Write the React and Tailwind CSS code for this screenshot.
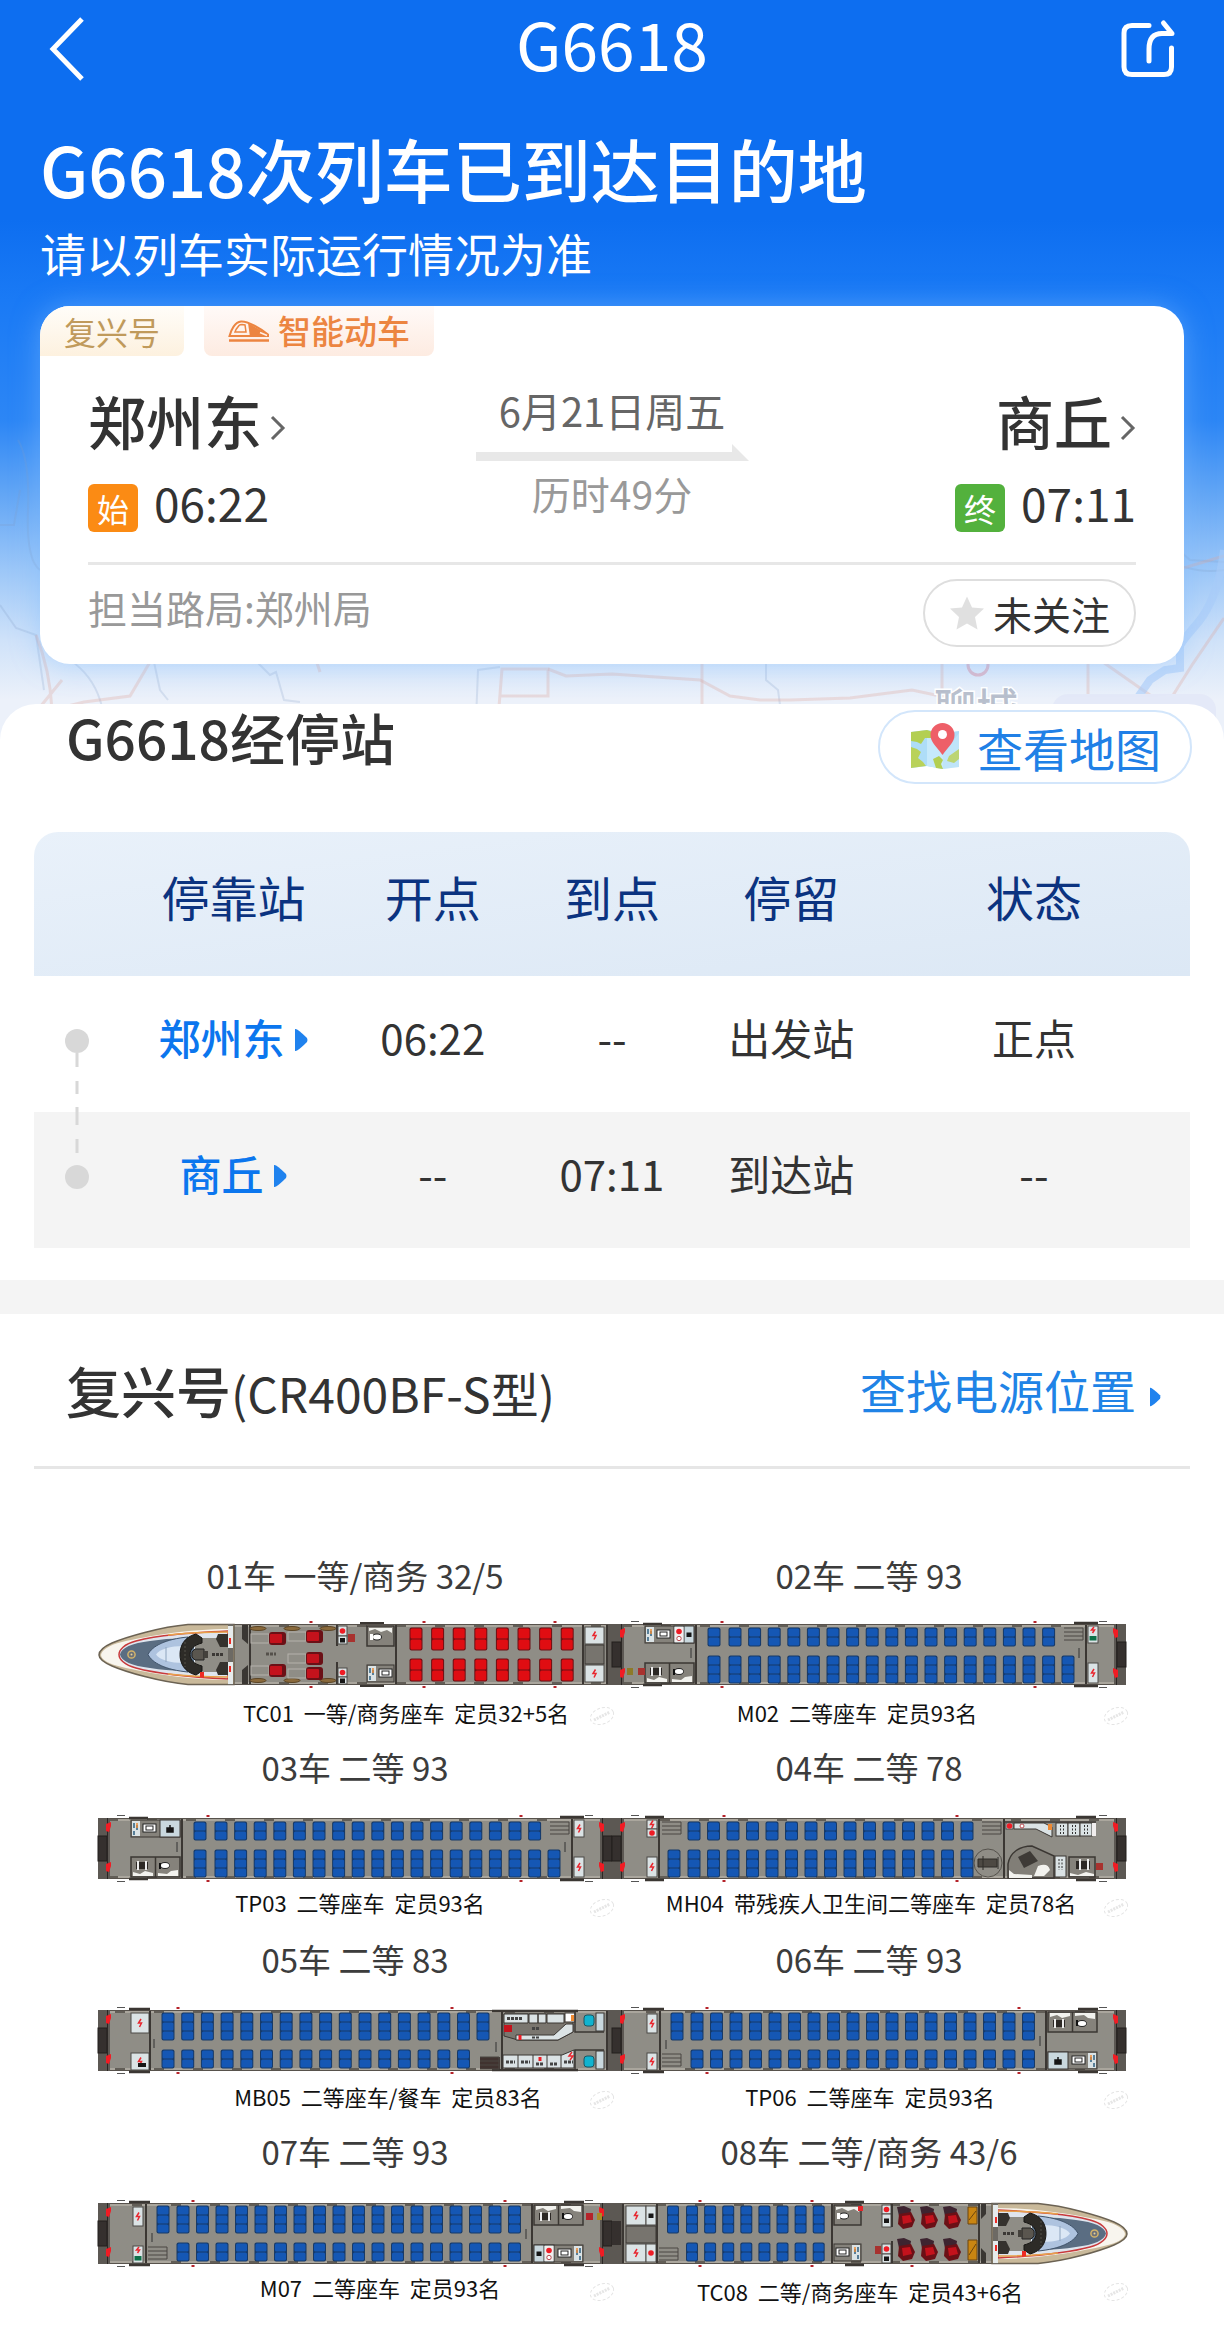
import React from "react";

const range = (start, step, count) => Array.from({ length: count }, (_, i) => start + i * step);

/* ---------- icons ---------- */

function BackIcon() {
  return (
    <svg viewBox="0 0 36 64" className="h-16 w-9" fill="none" stroke="#fff" strokeWidth="5">
      <path d="M34 2 5 32 34 62" />
    </svg>
  );
}

function ShareIcon() {
  return (
    <svg viewBox="0 0 56 60" className="h-15 w-14" fill="none" stroke="#fff" strokeWidth="5" strokeLinejoin="round">
      <path d="M29 6.500H12Q4 6.500 4 14V48Q4 55.500 12 55.500H44Q51.500 55.500 51.500 48V29" strokeLinecap="round" />
      <path d="M29 42V30Q29 14.500 42 14.500H52L43.500 4" strokeLinecap="round" />
    </svg>
  );
}

function TrainIcon() {
  return (
    <svg viewBox="0 0 42 22" className="h-[22px] w-[42px]">
      <path d="M1.500 16C3 10 7 2 13 1.500 20 1 33 9 40 14.500V16Z" fill="none" stroke="#ec8541" strokeWidth="2" />
      <path d="M20 3 40 14.500V17H22Z" fill="#ec8541" />
      <path d="M8 9.500 11 5.500Q12 4.500 14 4.500L17 5 18 12H7Z" fill="#fef4ee" stroke="#ec8541" strokeWidth="1.500" />
      <path d="M32 12.500 39 15.500" stroke="#fef0e8" strokeWidth="1.500" />
      <path d="M1 20.500H41" stroke="#ec8541" strokeWidth="2.500" />
    </svg>
  );
}

function Chevron() {
  return (
    <svg viewBox="0 0 16 26" className="mt-4 h-[26px] w-4" fill="none" stroke="#666" strokeWidth="3">
      <path d="M2 2 13 13 2 24" />
    </svg>
  );
}

function Triangle({ className = "mt-2 h-6 w-3.5" }) {
  return (
    <svg viewBox="0 0 14 24" className={className}>
      <path d="M1 1Q3 0 13 10Q14 12 13 14Q3 24 1 23Z" fill="#1f82ee" />
    </svg>
  );
}

function StarIcon() {
  return (
    <svg viewBox="0 0 36 36" className="size-9">
      <path d="M18 1.500 23 12.500 35 13.500 26 22 28.500 34.500 18 28.500 7.500 34.500 10 22 1 13.500 13 12.500Z" fill="#e0e0e0" />
    </svg>
  );
}

function MapIcon() {
  return (
    <svg viewBox="0 0 52 52" className="size-[52px]">
      <path d="M2 11 18 9 34 12 50 10V46L34 48 18 45 2 47Z" fill="#aeddf8" />
      <path d="M18 9 34 12V48L18 45Z" fill="#c6e9fb" />
      <path d="M2 11 18 9 24 11 22 17 16 17 12 23 8 21 2 20Z" fill="#b3cf52" />
      <path d="M2 26 8 28 12 31 9 37 14 41 17 45 2 47Z" fill="#b9d25a" />
      <path d="M24 38 30 35 34 39 32 43 34 48 27 47Z" fill="#b3cf52" />
      <path d="M40 35 50 28V38L45 42 38 40Z" fill="#a9c94c" />
      <path d="M34 34 50 12V46L34 48Z" fill="#fff" opacity=".22" />
      <path d="M33.500 34C27 25 21.500 21 21.500 14A12 12 0 0 1 45.500 14C45.500 21 40 25 33.500 34Z" fill="#ee5f68" />
      <circle cx="33.500" cy="13.500" r="4.500" fill="#fff" />
    </svg>
  );
}

/* ---------- faint route map behind the hero ---------- */

function MapBackdrop() {
  return (
    <svg
      viewBox="0 0 1224 340"
      preserveAspectRatio="none"
      className="absolute inset-x-0 bottom-0 h-[340px] w-full"
      fill="none"
      aria-hidden="true"
    >
      <g transform="translate(0 -20)">
        <g stroke="#7f9cc4" strokeOpacity=".22" strokeWidth="2">
          <path d="M18 60Q30 80 28 130T40 190M0 145H14L20 110M0 225 16 248 36 255 44 310" />
          <path d="M70 280Q92 295 100 320T104 340M154 282 160 310 168 320M258 283 270 295 276 292 284 320 300 322" />
          <path d="M476 340 478 290 500 287M766 278V300L778 310 782 340M1156 150 1190 180 1224 182M1160 175Q1190 195 1224 190" />
        </g>
        <g stroke="#dfa79b" strokeOpacity=".3" strokeWidth="3">
          <path d="M36 255Q50 290 52 330L84 322 130 316 150 282M36 332 62 300M498 340 502 289H548V316H500" />
          <path d="M548 289 566 296 612 294 700 300 730 316 760 320 790 320 850 318 912 310 940 316" />
          <path d="M702 270V340M942 270V320M1088 270V330M1224 238 1192 285 1170 320 1120 316M1100 280 1160 322M1150 198 1224 176" />
          <path d="M316 280 320 292" />
        </g>
      </g>
      <path d="M1224 150Q1218 200 1196 225T1180 250V268L1165 270 1150 280 1136 300" stroke="#a9ccf8" strokeOpacity=".6" strokeWidth="8" />
      <circle cx="978" cy="265" r="10" stroke="#d98a9c" strokeOpacity=".5" strokeWidth="3" />
      <text x="934" y="324" fontSize="42" fontWeight="500" fill="#a3acbd" fillOpacity=".75" stroke="#fff" strokeWidth="3" paintOrder="stroke">
        聊城
      </text>
      <rect x="1052" y="294" width="164" height="60" rx="16" fill="#e4e9f8" />
    </svg>
  );
}

/* ---------- train car drawing ---------- */

const FLOOR = "#8f8d86";
const WALL = "#3b3733";

function Seat({ x, y, n, color = "#1557b4", w = 12, h = 9 }) {
  return (
    <g>
      <rect x={x - w / 2 - 0.5} y={y - 0.5} width={w + 1} height={n * h + 1} rx="2" fill={color === "#1557b4" ? "#173a68" : "#6d1114"} />
      {range(0, 1, n).map((i) => (
        <rect key={i} x={x - w / 2 + 0.5} y={y + i * h + 0.5} width={w - 1} height={h - 1} rx="1.500" fill={color} />
      ))}
    </g>
  );
}

function Shell({ x = 0, w = 514, nudge = 0 }) {
  return (
    <g>
      <rect x={x} y="0" width={w} height="61" fill={FLOOR} />
      <rect x={x} y="0" width={w} height="3" fill="#aaa69d" />
      <rect x={x} y="58" width={w} height="3" fill="#aaa69d" />
      {range(x + 14 + nudge, 39, Math.floor((w - 14) / 39)).map((p) => (
        <g key={p} fill="#625e57">
          <rect x={p} y="0" width="10" height="3" />
          <rect x={p} y="58" width="10" height="3" />
        </g>
      ))}
      <path d={`M${x} .5H${x + w}M${x} 60.500H${x + w}`} stroke="#57524c" />
    </g>
  );
}

function Coupler({ x, flip }) {
  return (
    <g transform={flip ? `translate(${x} 0) scale(-1 1)` : `translate(${x} 0)`}>
      <rect width="12" height="61" fill="#5c5853" />
      <rect y="18" width="9" height="25" fill="#35302e" stroke="#221e1d" />
      <path d="M9.500 0V61" stroke="#2b2725" />
      <path d="M8 6 13 4V8L11 14 8 13ZM8 46 13 44V48L11 54 8 53Z" fill="#f01c24" />
      <path d="M19-2.500H27M19 63.500H27" stroke="#555" />
    </g>
  );
}

function Wall({ x }) {
  return <path d={`M${x} 1V60`} stroke={WALL} strokeWidth="2" />;
}

function Box({ x, y, w = 10, h = 17, mark = "bolt" }) {
  const cx = x + w / 2;
  const cy = y + h / 2;
  return (
    <g>
      <rect x={x} y={y} width={w} height={h} fill="#dbe3e5" stroke="#4c4a47" />
      {mark === "bolt" && <path d={`M${cx + 1} ${cy - 4} ${cx - 1.5} ${cy}H${cx + 1.5}L${cx - 0.5} ${cy + 4}`} fill="none" stroke="#e8272f" strokeWidth="1.500" />}
      {mark === "red" && <circle cx={cx} cy={cy} r="2.800" fill="#ee1c25" />}
      {mark === "black" && <rect x={cx - 2.5} y={cy - 2} width="5" height="4.500" fill="#161616" />}
      {mark === "green" && (
        <g>
          <path d={`M${cx + 1} ${y + 1} ${cx - 1.5} ${y + 4}H${cx + 1.5}L${cx - 0.5} ${y + 7}`} fill="none" stroke="#e8272f" strokeWidth="1.500" />
          <rect x={cx - 3.5} y={y + h - 7} width="7" height="4.500" fill="#0d7048" />
        </g>
      )}
    </g>
  );
}

function Stairs({ x, y, dark }) {
  return (
    <g>
      {dark && <rect x={x} y={y} width="20" height="12" fill="#40322f" />}
      <path d={`M${x} ${y}H${x + 19}M${x} ${y + 4}H${x + 19}M${x} ${y + 8}H${x + 19}M${x} ${y + 12}H${x + 19}M${x + 19} ${y}V${y + 12}`} stroke="#4b4742" fill="none" />
    </g>
  );
}

function Toilets({ x, y, flip, single }) {
  const w = single ? 27 : 49;
  return (
    <g transform={flip ? `translate(${x} ${y + 20}) scale(1 -1)` : `translate(${x} ${y})`}>
      <rect width={w} height="20" fill="#85827b" stroke={WALL} strokeWidth="1.500" />
      {single ? (
        <g>
          <path d="M2 18V15L8 17 14 14 20 16 25 13V18Z" fill="#f2f2ee" />
          <ellipse cx="10" cy="9" rx="4.500" ry="3" fill="#fff" stroke="#222" />
          <rect x="3" y="6" width="3" height="6" fill="#fff" />
        </g>
      ) : (
        <g>
          <path d="M24.500 0V20" stroke={WALL} strokeWidth="1.500" />
          <rect x="5" y="5" width="12" height="7" fill="#2c2825" />
          <path d="M7 4V13M15 4V13" stroke="#eee" strokeWidth="2" />
          <path d="M2 19V15L9 17 14 14 22 16V19ZM27 19V16L36 17 40 14 47 13V19Z" fill="#f2f2ee" />
          <ellipse cx="34" cy="8.500" rx="4.500" ry="3" fill="#fff" stroke="#222" />
          <rect x="28" y="6" width="2" height="6" fill="#111" />
        </g>
      )}
    </g>
  );
}

function Galley({ x, y, flip, marks = true, small }) {
  const w = small ? 27 : 49;
  return (
    <g transform={flip ? `translate(${x + w} ${y}) scale(-1 1)` : `translate(${x} ${y})`}>
      <rect width={w} height="17" fill="#85827b" stroke={WALL} />
      <rect x="1" y="1" width="8" height="15" fill="#dbe3e5" />
      <path d="M3 3V8M6 5V10M3 11V15" stroke="#2e5f7f" strokeWidth="1.500" />
      <path d="M6 3V8" stroke="#ee8a33" strokeWidth="1.500" />
      <rect x="12" y="4" width="13" height="8" fill="#fff" stroke="#222" />
      <rect x="15" y="6" width="7" height="4" fill="#fff" stroke="#222" />
      {!small && (
        <g>
          <rect x="29" y="0" width="20" height="17" fill="#c9d8de" stroke={WALL} />
          {marks ? (
            <g>
              <path d="M39 0V17" stroke={WALL} />
              <rect x="29.500" y="1" width="9" height="15" fill="#f1eeee" />
              <circle cx="34" cy="5.500" r="2.800" fill="#ee1c25" />
              <circle cx="34" cy="12.500" r="2.200" fill="#fff" stroke="#b94a50" />
              <rect x="41.500" y="6.500" width="5" height="4.500" fill="#161616" />
            </g>
          ) : (
            <path d="M36 8H42V12H36ZM39 5V9" fill="#161616" stroke="#161616" strokeWidth="1.500" />
          )}
        </g>
      )}
    </g>
  );
}

function Pins({ at }) {
  return (
    <g fill="#b5232a">
      {at.map((x) => (
        <path key={x} d={`M${x - 1.5}-3H${x + 1.5}V-1H${x - 1.5}ZM${x - 1.5} 62H${x + 1.5}V64H${x - 1.5}Z`} />
      ))}
    </g>
  );
}

function Nose() {
  return (
    <g>
      <path d="M136 .5H90C62 3 28 13 14 19 5 23 1 27 1 31S5 38 14 42C28 48 62 58 90 60.500H136Z" fill="#c9b99a" stroke="#6b6253" strokeWidth="1.500" />
      <path d="M132 5C90 5 50 12 24 18 10 21 3 27 3 31S10 40 24 43C50 49 90 56 132 56Z" fill="#f8f5ee" />
      <path d="M130 7C90 9 60 11 38 17 26 20 21 26 21 30.500S26 41 38 44C60 50 90 53 130 55Z" fill="#dfe5ee" stroke="#c83a3c" strokeWidth="1.500" />
      <path d="M130 8Q95 8 70 11M130 53Q95 53 70 50" stroke="#e8a04a" fill="none" strokeWidth="1.500" />
      <path d="M22 30.500C23 24 34 19 52 17 70 14 85 14 96 15V46C85 47 70 47 52 44 34 42 23 37 22 30.500Z" fill="#5a6d82" />
      <path d="M50 30.500C54 22 68 15 90 13V48C68 46 54 39 50 30.500Z" fill="#aec3df" stroke="#40536a" />
      <path d="M58 30.500C62 25 72 22 86 22V39C72 39 62 36 58 30.500Z" fill="#dbe7f5" />
      <path d="M68 23V38" stroke="#8da3bd" />
      <circle cx="33.500" cy="30.500" r="3.600" fill="#6b7079" stroke="#d3b36a" strokeWidth="1.500" />
      <circle cx="33.500" cy="30.500" r="1" fill="#e9d394" />
      <path d="M97 14H130V48H97Z" fill={FLOOR} />
      <path d="M120 10H130V23H122L118 15ZM120 51H130V38H122L118 46Z" fill="#35322e" />
      <path d="M98 10C86 13 82 22 82 30.500S86 48 98 51L104 47V42C96 40 92 36 92 30.500S96 21 104 19V14Z" fill="#2d2b27" stroke="#171614" />
      <path d="M87 18V43" stroke="#55524a" strokeDasharray="2 2" />
      <path d="M97 25H106V36H97L94 33V28Z" fill="#5a564f" stroke="#222" />
      <path d="M106 27H110V34H106Z" fill="#44413c" />
      <path d="M114 30.500H125" stroke="#3c3936" strokeWidth="3" strokeDasharray="3 1" />
      <path d="M102 53V48H106V54Z" fill="#ee2a24" />
      <rect x="130" y="0" width="5" height="61" fill="#6d6a64" />
      <rect x="130" y="2" width="5" height="22" fill="#e6ebec" />
      <rect x="130" y="38" width="5" height="22" fill="#e6ebec" />
      <path d="M132 14V20M132 42V48" stroke="#ee2a24" strokeWidth="2" />
    </g>
  );
}

function Recliner({ x, y }) {
  return (
    <g>
      <rect x={x - 26} y={y - 4} width="18" height="9" fill="none" stroke="#b5b2ab" />
      <rect x={x - 8} y={y - 6} width="17" height="13" rx="3" fill="#6b1016" />
      <rect x={x - 7} y={y - 4} width="12" height="9" rx="1" fill="#c4121c" />
    </g>
  );
}

function LoungeSeat({ x, y }) {
  return (
    <g>
      <path d={`M${x - 9} ${y - 10} ${x - 2} ${y - 11} ${x + 5} ${y - 8} ${x + 4} ${y - 1}H${x - 7}Z`} fill="#3d2430" />
      <path d={`M${x - 7} ${y - 3} ${x + 5} ${y - 5} ${x + 9} ${y + 3} ${x + 6} ${y + 10} ${x - 3} ${y + 12} ${x - 8} ${y + 7}Z`} fill="#6b1016" />
      <path d={`M${x - 4} ${y - 1} ${x + 4} ${y - 2} ${x + 6} ${y + 5} ${x - 3} ${y + 7}Z`} fill="#c4121c" />
    </g>
  );
}

function Car01() {
  return (
    <g>
      <Shell x={134} w={380} nudge={33} />
      <Nose />
      <path d="M144 1V15L150 20V1M144 60V46L150 41V60" fill="#3a3733" />
      <Wall x={152} />
      {[160, 194, 230].map((x) => (
        <g key={x} fill="#8a6a3c" stroke="#5b4526">
          <ellipse cx={x} cy="4.500" rx="8" ry="2" />
          <ellipse cx={x} cy="56.500" rx="8" ry="2" />
        </g>
      ))}
      <Recliner x={179} y={14} />
      <Recliner x={216} y={12} />
      <Recliner x={216} y={34} />
      <Recliner x={179} y={46} />
      <Recliner x={216} y={49} />
      <path d="M168 30H178" stroke="#55514b" strokeWidth="3" strokeDasharray="3 1" />
      <path d="M239 1V22M239 38V60" stroke={WALL} strokeWidth="2" />
      <Box x={240} y={2} w={9} h={10} mark="red" />
      <Box x={240} y={12} w={9} h={8} mark="black" />
      <Box x={240} y={44} w={9} h={9} mark="red" />
      <Box x={240} y={53} w={9} h={7} mark="black" />
      <rect x="250" y="10" width="7" height="8" fill="#a8322f" />
      <path d="M262-1H286M262 62H286" stroke={WALL} strokeWidth="2" />
      <Toilets x={269} y={2} single flip />
      <Galley x={269} y={41} small />
      <Wall x={298} />
      {range(318, 21.6, 8).map((x) => (
        <g key={x}>
          <Seat x={x} y={4} n={2} w={12} h={11} color="#e00d12" />
          <Seat x={x} y={35} n={2} w={12} h={11} color="#e00d12" />
        </g>
      ))}
      <Wall x={485} />
      <Box x={487} y={3} w={19} h={17} />
      <rect x="487" y="21" width="19" height="19" fill="#77746e" stroke={WALL} />
      <Box x={487} y={41} w={19} h={17} />
      <Wall x={509} />
      <rect x="510" width="4" height="61" fill="#5c5853" />
      <Pins at={[213, 326, 457]} />
    </g>
  );
}

function StandardCar({ marks = true, green }) {
  return (
    <g>
      <Shell nudge={-4} />
      <Coupler x={0} />
      <Coupler x={514} flip />
      <path d="M31 0H50M31 61H50M462-1H486M462 62H486" stroke={WALL} strokeWidth="2.500" />
      <Galley x={33} y={2} marks={marks} />
      <Toilets x={33} y={39} />
      <Wall x={84} />
      <path d="M79 24V34M467 24V34" stroke="#333" />
      <Seat x={102} y={4} n={2} />
      <Seat x={102} y={32} n={3} />
      {range(123, 19.6, 17).map((x) => (
        <g key={x}>
          <Seat x={x} y={4} n={2} />
          <Seat x={x} y={32} n={3} />
        </g>
      ))}
      <Seat x={456} y={32} n={3} />
      <Stairs x={452} y={4} />
      <Wall x={474} />
      <Box x={476} y={2} mark={green ? "green" : "bolt"} />
      <Box x={476} y={39} h={20} />
      {marks && <rect x="26" y="44" width="7" height="7" fill="#a8322f" />}
      {marks && <rect x="15" y="44" width="6" height="7" fill="#8d7a28" />}
      <Pins at={[110, 423]} />
    </g>
  );
}

function ReverseCar({ marks, green }) {
  return (
    <g>
      <Shell nudge={20} />
      <Coupler x={0} />
      <Coupler x={514} flip />
      <path d="M31-1H52M31 62H52M466-1H486M466 62H486" stroke={WALL} strokeWidth="2.500" />
      <Box x={35} y={4} h={19} />
      <Box x={35} y={43} h={17} mark={green ? "green" : "bolt"} />
      <Wall x={48} />
      <path d="M54 30V39M428 26V36" stroke="#333" />
      <Stairs x={50} y={44} />
      <Seat x={65} y={3} n={3} />
      {range(85, 19.5, 18).map((x) => (
        <g key={x}>
          <Seat x={x} y={3} n={3} />
          <Seat x={x} y={40} n={2} />
        </g>
      ))}
      <Wall x={434} />
      <Toilets x={436} y={2} flip />
      <Galley x={436} y={42} flip marks={marks} />
      {marks && <rect x="488" y="10" width="7" height="7" fill="#b5232a" />}
      {marks && <rect x="499" y="10" width="5" height="7" fill="#a98b25" />}
      <Pins at={[95, 407]} />
    </g>
  );
}

function Car04() {
  return (
    <g>
      <Shell nudge={34} />
      <Coupler x={0} />
      <Coupler x={514} flip />
      <path d="M33-1H52M33 62H52M464-1H484M464 62H484" stroke={WALL} strokeWidth="2.500" />
      <Box x={35} y={2} h={9} />
      <Box x={35} y={11} h={8} mark="red" />
      <Box x={35} y={39} h={20} />
      <Wall x={47} />
      <Stairs x={50} y={4} />
      <Seat x={62} y={32} n={3} />
      {range(82, 19.5, 15).map((x) => (
        <g key={x}>
          <Seat x={x} y={4} n={2} />
          <Seat x={x} y={32} n={3} />
        </g>
      ))}
      <Stairs x={370} y={4} />
      <circle cx="376" cy="45" r="14" fill="none" stroke="#55524c" />
      <path d="M366 41H385V49H366ZM371 38V52M386 39V51" fill="#4d4943" stroke="#2f2c29" />
      <Wall x={392} />
      <path d="M393 4H484" stroke={WALL} strokeWidth="1.500" />
      <Box x={394} y={5} w={7} h={6} mark="red" />
      <path d="M402 5H432L440 9V19L424 11H402Z" fill="#dbe3e5" stroke={WALL} />
      <circle cx="410" cy="8" r="2" fill="#fff" stroke="#b94a50" />
      <rect x="436" y="6" width="4" height="6" fill="#ee8a33" />
      {[444, 456, 468].map((x) => (
        <g key={x}>
          <rect x={x} y="5" width="12" height="13" fill="#dbe3e5" stroke={WALL} />
          <path d={`M${x + 4.5} 7V16M${x + 7.500} 7V16`} stroke="#333" strokeDasharray="2 1.500" />
        </g>
      ))}
      <rect x="480" y="5" width="4" height="13" fill="#f1eeee" />
      <path d="M396 60V46C398 34 408 28 420 28L442 38V60Z" fill="#817e77" stroke={WALL} strokeWidth="1.500" />
      <path d="M406 39 418 33 426 43 412 50Z" fill="#3e3a36" />
      <path d="M397 52 402 56 420 57V60H397ZM426 48Q436 44 438 52L432 58H422Z" fill="#f2f2ee" />
      <rect x="443" y="38" width="11" height="21" fill="#dbe3e5" stroke={WALL} />
      <path d="M447 41V52M450 41V52" stroke="#333" strokeDasharray="2 1.500" />
      <rect x="457" y="39" width="26" height="20" fill="#85827b" stroke={WALL} strokeWidth="1.500" />
      <path d="M464 43H478V51H464Z" fill="#2c2825" />
      <path d="M468 41V52M476 41V52" stroke="#eee" strokeWidth="2" />
      <path d="M458 58V55L466 57 474 54 482 56V58Z" fill="#f2f2ee" />
      <rect x="484" y="45" width="7" height="7" fill="#a8322f" />
      <Pins at={[112, 345]} />
    </g>
  );
}

function Car05() {
  return (
    <g>
      <Shell nudge={3} />
      <Coupler x={0} />
      <path d="M31-1H52M31 62H52M394 1H480M394 60H480" stroke={WALL} strokeWidth="2.500" />
      <Box x={33} y={3} w={18} h={20} />
      <Box x={33} y={43} w={18} h={17} />
      <rect x="40" y="53" width="8" height="4" fill="#161616" />
      <Wall x={52} />
      <path d="M56 29V38M398 32V42" stroke="#333" />
      {range(70, 19.7, 16).map((x) => (
        <g key={x}>
          <Seat x={x} y={3} n={3} />
          <Seat x={x} y={40} n={2} />
        </g>
      ))}
      <Seat x={385} y={3} n={3} />
      <Stairs x={382} y={47} dark />
      <Wall x={404} />
      <path d="M406 4H475V22L460 30H420L406 26Z" fill="#7a766f" stroke={WALL} />
      <path d="M406 4H430V13H406ZM431 4H440V13H431ZM440 4H448V13H440ZM449 4H466V13H449Z" fill="#dbe3e5" stroke={WALL} />
      <path d="M409 8.500H424M434 18.500H442" stroke="#444" strokeWidth="3" strokeDasharray="3 1" />
      <path d="M418 25H456L468 14H475V22L460 30H418Z" fill="#dbe3e5" stroke={WALL} />
      <path d="M434 27.500H442" stroke="#444" strokeWidth="2" strokeDasharray="3 1" />
      <rect x="467" y="3" width="10" height="9" fill="#fff" stroke={WALL} />
      <rect x="473" y="5" width="3" height="6" fill="#ee8a33" />
      <rect x="406" y="15" width="8" height="7" fill="#c4121c" />
      <path d="M422 25V30M444 46V52" stroke="#ee1c25" strokeWidth="3" />
      <path d="M405 45H464L476 40V58H405Z" fill="#dbe3e5" stroke={WALL} />
      <path d="M420 45V58M435 45V58M449 45V58M463 45V58" stroke={WALL} />
      <path d="M408 52H417M423 52H432M438 54H446M452 54H460M466 52H475" stroke="#444" strokeWidth="3" strokeDasharray="3 1" />
      <path d="M474 42 471 46H475L472 50" stroke="#e8272f" strokeWidth="1.500" fill="none" />
      <path d="M442 47V51" stroke="#ee1c25" strokeWidth="3" />
      <path d="M477 1V22H506M477 60V40H506" fill="none" stroke={WALL} strokeWidth="1.500" />
      <rect x="486" y="5" width="10" height="11" rx="3" fill="#10b3cf" stroke="#1b5560" />
      <rect x="486" y="46" width="10" height="11" rx="3" fill="#10b3cf" stroke="#1b5560" />
      <rect x="498" y="3" width="8" height="18" fill="#c9d8de" stroke={WALL} />
      <rect x="498" y="41" width="8" height="18" fill="#c9d8de" stroke={WALL} />
      <Wall x={509} />
      <rect x="510" width="4" height="61" fill="#5c5853" />
      <Pins at={[80, 354]} />
    </g>
  );
}

function Car08() {
  return (
    <g>
      <Shell x={0} w={382} nudge={30} />
      <g transform="translate(516 0) scale(-1 1)">
        <Nose />
      </g>
      <rect width="10" height="61" fill="#5c5853" />
      <rect y="18" width="9" height="24" fill="#35302e" />
      <Wall x={11} />
      <Box x={14} y={3} w={20} h={19} />
      <Box x={34} y={3} w={10} h={19} mark="black" />
      <rect x="14" y="23" width="30" height="17" fill="#77746e" stroke={WALL} />
      <Box x={14} y={41} w={20} h={18} />
      <Box x={34} y={41} w={10} h={18} mark="red" />
      <Wall x={45} />
      <Stairs x={47} y={45} />
      <Seat x={61} y={3} n={3} w={11} />
      {range(80, 18.1, 8).map((x) => (
        <g key={x}>
          <Seat x={x} y={3} n={3} w={11} />
          <Seat x={x} y={40} n={2} w={11} />
        </g>
      ))}
      <Wall x={220} />
      <Toilets x={222} y={2} single flip />
      <Galley x={222} y={41} flip small />
      <rect x="246" y="3" width="5" height="5" fill="#e5262b" />
      <path d="M233-1H252M233 62H252" stroke={WALL} strokeWidth="2.500" />
      <Box x={270} y={2} w={9} h={9} mark="red" />
      <Box x={270} y={11} w={9} h={13} mark="black" />
      <Box x={270} y={41} w={9} h={10} mark="red" />
      <Box x={270} y={51} w={9} h={9} mark="black" />
      <rect x="263" y="43" width="6" height="8" fill="#a8322f" />
      <path d="M280 1V24M280 38V60" stroke={WALL} strokeWidth="2" />
      {[294, 317, 340].map((x) => (
        <g key={x}>
          <LoungeSeat x={x} y={14} />
          <LoungeSeat x={x} y={46} />
        </g>
      ))}
      <path d="M356 4H365V21H356ZM356 37H365V57H356Z" fill="#c98512" stroke="#6b4510" />
      <path d="M357 17 364 8M357 52 364 41" stroke="#6b4510" />
      <Wall x={367} />
      <path d="M369 1V16L374 11V1M369 60V45L374 50V60" fill="#3a3733" />
      <Pins at={[88, 200, 300]} />
    </g>
  );
}

const cars = [
  { title: "01车 一等/商务 32/5", caption: "TC01  一等/商务座车  定员32+5名", cx: 308, cy: 114, top: 25, Drawing: Car01 },
  { title: "02车 二等 93", caption: "M02  二等座车  定员93名", cx: 245, cy: 114, top: 25, Drawing: StandardCar, props: { green: true } },
  { title: "03车 二等 93", caption: "TP03  二等座车  定员93名", cx: 262, cy: 112, top: 27, Drawing: StandardCar, props: { marks: false } },
  { title: "04车 二等 78", caption: "MH04  带残疾人卫生间二等座车  定员78名", cx: 259, cy: 112, top: 27, Drawing: Car04 },
  { title: "05车 二等 83", caption: "MB05  二等座车/餐车  定员83名", cx: 290, cy: 114, top: 27, Drawing: Car05 },
  { title: "06车 二等 93", caption: "TP06  二等座车  定员93名", cx: 258, cy: 114, top: 27, Drawing: ReverseCar, props: { marks: false } },
  { title: "07车 二等 93", caption: "M07  二等座车  定员93名", cx: 282, cy: 113, top: 28, Drawing: ReverseCar, props: { marks: true, green: true } },
  { title: "08车 二等/商务 43/6", caption: "TC08  二等/商务座车  定员43+6名", cx: 248, cy: 117, top: 28, Drawing: Car08 },
];

function TrainCar({ title, caption, cx, cy, top, Drawing, props }) {
  return (
    <li>
      <h3 className="text-center text-[33px] leading-12 whitespace-nowrap text-[#3c3c3c]">{title}</h3>
      <svg viewBox="0 0 514 144" className="block w-full overflow-visible" role="img" aria-label={caption}>
        <g transform={`translate(0 ${top})`}>
          <Drawing {...props} />
        </g>
        <text x={cx} y={cy + 9} textAnchor="middle" fontSize="22" fill="#111" className="whitespace-pre">
          {caption}
        </text>
        <ellipse cx="504" cy="117" rx="12" ry="8" fill="none" stroke="#e4e4e4" strokeDasharray="3 2" transform="rotate(-20 504 117)" />
        <path d="M496 121 512 113" stroke="#e6e6e6" strokeWidth="3" strokeDasharray="2 1" />
      </svg>
    </li>
  );
}

/* ---------- stops table ---------- */

const stops = [
  { name: "郑州东", depart: "06:22", arrive: "--", stay: "出发站", status: "正点" },
  { name: "商丘", depart: "--", arrive: "07:11", stay: "到达站", status: "--" },
];

function StopMarker({ last }) {
  return (
    <svg viewBox="0 0 24 136" className="mx-auto block h-[136px] w-6" aria-hidden="true">
      {last ? (
        <path d="M12 0V13M12 27V41" stroke="#d8d8d8" strokeWidth="3" />
      ) : (
        <path d="M12 77V91M12 105V118M12 131V136" stroke="#d8d8d8" strokeWidth="3" />
      )}
      <circle cx="12" cy="65" r="12" fill="#d8d8d8" />
    </svg>
  );
}

function StopsTable() {
  return (
    <div className="mx-[34px] mt-12 overflow-hidden rounded-t-3xl">
      <table className="w-full table-fixed border-collapse text-center text-[42px] text-[#333]">
        <colgroup>
          <col className="w-[7.5%]" />
          <col className="w-[19.5%]" />
          <col className="w-[15%]" />
          <col className="w-[16%]" />
          <col className="w-[15%]" />
          <col className="w-[27%]" />
        </colgroup>
        <thead>
          <tr className="h-36 bg-linear-to-br from-[#e9f1fa] to-[#dce8f5] text-5xl text-[#0b3380]">
            <th aria-label="进度" />
            {["停靠站", "开点", "到点", "停留", "状态"].map((h) => (
              <th key={h} scope="col" className="p-0 pb-4 font-normal whitespace-nowrap">{h}</th>
            ))}
          </tr>
        </thead>
        <tbody>
          {stops.map((s, i) => (
            <tr key={s.name} className="even:bg-[#f4f4f4]">
              <td className="p-0"><StopMarker last={i === stops.length - 1} /></td>
              <td className="p-0 pb-4">
                <a href="#station" className="inline-flex items-center gap-2.5 font-medium whitespace-nowrap text-[#0b76ee]">
                  {s.name}
                  <Triangle />
                </a>
              </td>
              <td className="p-0 pb-4">{s.depart}</td>
              <td className="p-0 pb-4">{s.arrive}</td>
              <td className="p-0 pb-4 whitespace-nowrap">{s.stay}</td>
              <td className="p-0 pb-4">{s.status}</td>
            </tr>
          ))}
        </tbody>
      </table>
    </div>
  );
}

/* ---------- journey card ---------- */

function Station({ name, badge, badgeClass, time, end }) {
  return (
    <div className={end ? "flex flex-col items-end" : "flex flex-col items-start"}>
      <a href="#station" className="flex items-center gap-2 text-[58px] leading-[72px] font-medium text-[#333]">
        {name}
        <Chevron />
      </a>
      <div className="mt-7 flex h-12 items-start gap-4">
        <span className={badgeClass}>{badge}</span>
        <time className="text-[46px] leading-9 text-[#333]">{time}</time>
      </div>
    </div>
  );
}

function JourneyCard() {
  return (
    <section className="relative mx-10 mt-6 rounded-[30px] bg-white pb-[17px] shadow-[0_0_28px_rgba(130,190,255,0.5)]">
      <div className="flex h-[50px] gap-5 overflow-hidden rounded-tl-[30px]">
        <span className="flex items-center rounded-br-lg bg-linear-to-b from-[#fffdf9] to-[#fdf1df] px-6 text-[32px] text-[#c09a5b]">复兴号</span>
        <span className="flex items-center gap-2 rounded-b-lg bg-linear-to-b from-[#fffaf8] to-[#fdebe1] px-6 text-[33px] font-medium text-[#ec8541]">
          <TrainIcon />
          智能动车
        </span>
      </div>
      <div className="mx-12">
        <div className="mt-7 flex items-start justify-between">
          <Station
            name="郑州东"
            badge="始"
            badgeClass="flex h-12 w-[50px] items-center justify-center rounded-md bg-[#fb8b14] text-[32px] text-white"
            time="06:22"
          />
          <div className="absolute inset-x-0 flex flex-col items-center pt-0.5">
            <p className="text-[40px] leading-12 text-[#666]">6月21日周五</p>
            <svg viewBox="0 0 273 17" className="mt-2.5 h-[17px] w-[273px]" aria-hidden="true">
              <path d="M0 8H256V0L273 17H0Z" fill="#e8e8e8" />
            </svg>
            <p className="mt-2 text-[39px] leading-12 text-[#999]">历时49分</p>
          </div>
          <Station
            name="商丘"
            badge="终"
            badgeClass="flex h-12 w-[50px] items-center justify-center rounded-md bg-[#53b13d] text-[32px] text-white"
            time="07:11"
            end
          />
        </div>
        <hr className="mt-[30px] h-[3px] border-0 bg-[#e7e7e7]" />
        <div className="mt-3.5 flex items-start justify-between">
          <p className="text-[39px] leading-14 text-[#999]">担当路局:郑州局</p>
          <button type="button" className="flex h-[68px] items-center gap-2 rounded-full border-2 border-[#dedede] px-6 text-[39px] text-[#333]">
            <StarIcon />
            未关注
          </button>
        </div>
      </div>
    </section>
  );
}

export default function App() {
  return (
    <main className="min-h-screen w-full bg-white font-['Noto_Sans_CJK_SC',sans-serif]">
      <div className="relative bg-[linear-gradient(180deg,#0d6ef0_0px,#0d6ef0_220px,#1a7af5_300px,#2c86f5_420px,#5fa4f5_490px,#9cc7f8_570px,#cfe2f9_640px,#ecf1fa_700px)] pb-19">
        <MapBackdrop />
        <header className="relative flex h-[98px] items-center justify-between px-12 text-white">
          <button type="button" aria-label="返回" className="flex w-14 justify-start"><BackIcon /></button>
          <h1 className="pb-3.5 text-[66px] leading-20">G6618</h1>
          <button type="button" aria-label="分享"><ShareIcon /></button>
        </header>
        <div className="relative px-10 text-white">
          <h2 className="mt-[30px] text-[69px] leading-20 font-medium">G6618次列车已到达目的地</h2>
          <p className="mt-3.5 text-[46px] leading-15">请以列车实际运行情况为准</p>
        </div>
        <JourneyCard />
      </div>

      <section className="relative -mt-9 rounded-t-[36px] bg-white pt-1.5">
        <div className="flex items-start justify-between pr-8 pl-[66px]">
          <h2 className="text-[55px] leading-13 font-medium text-[#333]">G6618经停站</h2>
          <button type="button" className="flex h-[74px] items-center gap-4 rounded-full border-2 border-[#d3e6fb] px-[29px] text-[46px] text-[#2080e6]">
            <MapIcon />
            查看地图
          </button>
        </div>
        <StopsTable />
      </section>

      <div className="mt-8 h-[34px] bg-[#f4f4f4]" />

      <section>
        <div className="mx-[34px] flex h-[155px] items-center justify-between border-b-3 border-[#e6e6e6] pr-7 pb-0.5 pl-8">
          <h2 className="text-[55px] font-medium text-[#333]">
            复兴号<span className="text-[48px] font-normal">(CR400BF-S型)</span>
          </h2>
          <a href="#power" className="flex items-center gap-3 text-[46px] text-[#2083e6]">
            查找电源位置
            <Triangle className="mt-4 h-5 w-3.5" />
          </a>
        </div>
        <ul className="mt-[82px] grid grid-cols-2 px-[98px] pb-3">
          {cars.map((c) => (
            <TrainCar key={c.title} {...c} />
          ))}
        </ul>
      </section>
    </main>
  );
}
